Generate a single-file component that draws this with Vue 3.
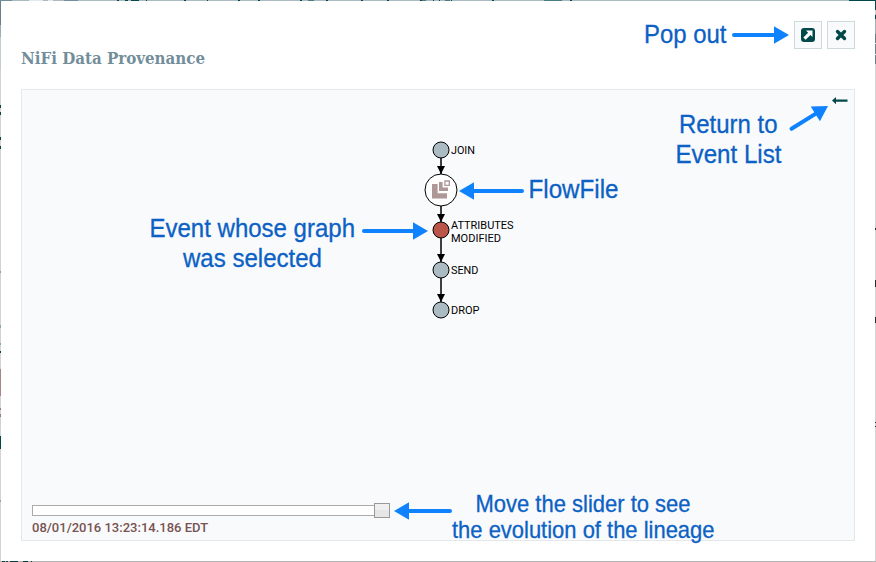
<script setup>
const links = [
  { from: 150, to: 174 },
  { from: 206, to: 222 },
  { from: 238, to: 262 },
  { from: 278, to: 302 },
]
const events = [
  { y: 150, lines: ['JOIN'], width: 24, offset: 4 },
  { y: 230, lines: ['ATTRIBUTES', 'MODIFIED'], width: 62.5, offset: -1, selected: true },
  { y: 270, lines: ['SEND'], width: 27.5, offset: 4 },
  { y: 310, lines: ['DROP'], width: 28.5, offset: 4 },
]
const notes = [
  { text: 'Pop out', x: 644, y: 43, w: 82.5, size: 25.2 },
  { text: 'Return to', x: 679, y: 133, w: 98.5, size: 25.2 },
  { text: 'Event List', x: 675.5, y: 163, w: 106, size: 25.2 },
  { text: 'FlowFile', x: 528.5, y: 198, w: 90, size: 25.2 },
  { text: 'Event whose graph', x: 149.5, y: 237, w: 205.5, size: 25.2 },
  { text: 'was selected', x: 183, y: 267, w: 139, size: 25.2 },
  { text: 'Move the slider to see', x: 475.5, y: 511.5, w: 215, size: 23.4 },
  { text: 'the evolution of the lineage', x: 452, y: 538, w: 262.5, size: 23.4 },
]
const arrows = [
  { x: 789, y: 35, angle: 0, length: 55 },
  { x: 828, y: 106, angle: -32, length: 43 },
  { x: 459, y: 191, angle: 180, length: 63 },
  { x: 428, y: 231, angle: 0, length: 64 },
  { x: 394, y: 511, angle: 180, length: 56 },
]
</script>

<template>
  <main class="shell">
    <section class="dialog">
      <header class="header">
        <h1 class="title">NiFi Data Provenance</h1>
        <div class="actions">
          <button class="action" aria-label="Pop out">
            <svg width="14" height="14" viewBox="0 0 14 14">
              <rect width="14" height="14" rx="3" fill="#004849" />
              <path d="M5 2.5h6.5V9L9.5 7 4.6 11.7 2.4 9.5 7.1 4.7z" fill="#fff" />
            </svg>
          </button>
          <button class="action" aria-label="Close">
            <svg width="12" height="12" viewBox="0 0 12 12">
              <path d="M2.5 2.5 9.5 9.5M9.5 2.5 2.5 9.5" stroke="#004849" stroke-width="3.4" stroke-linecap="round" />
            </svg>
          </button>
        </div>
      </header>
      <div class="panel">
        <div class="back">
          <svg width="16" height="8" viewBox="0 0 16 8">
            <path d="M0 3.6 4 0V2.5H15.5V4.7H4V7.2z" fill="#004849" />
          </svg>
        </div>
        <div class="timeline">
          <div class="track"><span class="handle"></span></div>
          <div class="time">08/01/2016 13:23:14.186 EDT</div>
        </div>
      </div>
    </section>

    <svg class="canvas" width="876" height="562" viewBox="0 0 876 562">
      <g v-for="l in links" :key="l.from">
        <path :d="`M441 ${l.from}V${l.to}`" stroke="#000" stroke-width="1.5" />
        <path :d="`M437 ${l.to - 8}h8l-4 8z`" />
      </g>
      <g v-for="e in events" :key="e.y">
        <circle cx="441" :cy="e.y" r="8" :fill="e.selected ? '#ba554a' : '#aabbc3'" stroke="#000" />
        <text
          v-for="(line, i) in e.lines"
          :key="line"
          class="event"
          x="451"
          :y="e.y + e.offset + i * 13"
          :textLength="i ? 50 : e.width"
          lengthAdjust="spacingAndGlyphs"
        >{{ line }}</text>
      </g>
      <circle cx="441" cy="190" r="16" fill="#fff" stroke="#000" />
      <g fill="#ad9897">
        <path d="M432 184h5.6v9.3h9.4v5.2h-15z" />
        <path d="M439 182h3.6v5.5h5.4v3.5h-9z" />
        <path d="M444.9 181h4.4v4.4h-4.4z" fill="none" stroke="#ad9897" stroke-width="1.3" />
      </g>
      <g v-for="a in arrows" :key="a.y" :transform="`translate(${a.x} ${a.y}) rotate(${a.angle})`">
        <path :d="`M${-a.length} 0H-12`" stroke="#0f82ff" stroke-width="4" stroke-linecap="round" />
        <path d="M0 0-15-8.7V8.7z" fill="#0f82ff" />
      </g>
      <text
        v-for="n in notes"
        :key="n.text"
        class="note"
        :x="n.x"
        :y="n.y"
        :font-size="n.size"
        :textLength="n.w"
        lengthAdjust="spacingAndGlyphs"
      >{{ n.text }}</text>
    </svg>

    <svg class="canvas" width="876" height="562" viewBox="0 0 876 562" shape-rendering="crispEdges">
      <path d="M0 .5H876" stroke="#aabbc3" />
      <path d="M0 .5H12M64 .5H78" stroke="#728e9b" />
      <path d="M29 .5H43M48 .5H53" stroke="#e3e8eb" />
      <path d="M117 .5h2M125 .5h3M131 .5h8M146 .5h1M184 .5h2M207 .5h1M238 .5h2M258 .5h2M300 .5h2M326 .5h2M361 .5h2M387 .5h2M420 .5h2M433 .5h1M439 .5h1M451 .5h1M492 .5h2M570 .5h2M849 .5H876" stroke="#004849" />
      <path d="M308 .5h6M422 .5h4M445 .5h5M544 .5h18" stroke="#4b7d80" />
      <path d="M.5 1V562M875.5 1V562" stroke="#d3d3d3" />
      <path d="M.5 1V25M875.5 34V64" stroke="#657f8b" />
      <path d="M.5 25V37M875.5 14V34" stroke="#9daeb5" />
      <path d="M.5 37V70" stroke="#c3cdd2" />
      <path d="M.5 105v3M.5 112v3M.5 137v3M.5 146v3M.5 351v2M.5 436v13M875.5 1v9M875.5 15v4" stroke="#004849" />
      <path d="M.5 271v2M.5 325v3M.5 343v2M.5 500v2" stroke="#8ba6ae" />
      <path d="M.5 369v27" stroke="#a78586" />
      <path d="M.5 408v2M.5 414v3" stroke="#967c7d" />
      <path d="M875.5 228v2M875.5 280v7M875.5 317v6M875.5 422v1M875.5 426v1" stroke="#292929" />
      <path d="M875.5 43v1M875.5 54v1" stroke="#eee" />
      <path d="M0 561.5H876" stroke="#b4b4b4" />
      <path d="M2 561.5h3M6 561.5h2M10 561.5h8M23 561.5h5M31 561.5h1" stroke="#063c3c" />
    </svg>
  </main>
</template>

<style>
body {
  margin: 0;
  overflow: hidden;
}
</style>

<style scoped>
.shell {
  position: relative;
  width: 876px;
  height: 562px;
}
.dialog {
  box-sizing: border-box;
  display: flex;
  flex-direction: column;
  height: 562px;
  padding: 21px;
  background: #fff;
}
.header {
  display: flex;
  justify-content: space-between;
  height: 68px;
}
.title {
  margin: 26px 0 0;
  font: bold 17.5px/22px "Roboto Slab", "DejaVu Serif Condensed", "DejaVu Serif", serif;
  color: #728e9b;
  white-space: nowrap;
  transform: scaleX(.957);
  transform-origin: left;
}
.actions {
  display: flex;
  gap: 5px;
}
.action {
  box-sizing: border-box;
  display: flex;
  align-items: center;
  justify-content: center;
  width: 28px;
  height: 28px;
  padding: 0;
  border: 1px solid #ccdadb;
  background: #f9fafb;
}
.panel {
  box-sizing: border-box;
  display: flex;
  flex-direction: column;
  justify-content: space-between;
  height: 452px;
  padding: 7px 6px 5px 10px;
  border: 1px solid #e3e8eb;
  background: #f9fafc;
}
.back {
  display: flex;
  justify-content: flex-end;
}
.timeline {
  width: 358px;
}
.track {
  box-sizing: border-box;
  display: flex;
  align-items: center;
  justify-content: flex-end;
  width: 358px;
  height: 11px;
  border: 1px solid #aaa;
  background: #fff;
}
.handle {
  box-sizing: border-box;
  flex: none;
  width: 16px;
  height: 15px;
  margin-right: -1px;
  border: 1px solid #999;
  background: linear-gradient(#efefef 50%, #e6e6e6 50%);
}
.time {
  padding-top: 4px;
  font: 500 13px/15px Roboto, sans-serif;
  color: #775351;
}
.canvas {
  position: absolute;
  inset: 0;
  pointer-events: none;
}
.event {
  font: 11px Roboto, sans-serif;
  fill: #000;
}
.note {
  font-family: "Liberation Sans", Arial, sans-serif;
  fill: #0b61c4;
  stroke: #0b61c4;
  stroke-width: .3px;
}
</style>
